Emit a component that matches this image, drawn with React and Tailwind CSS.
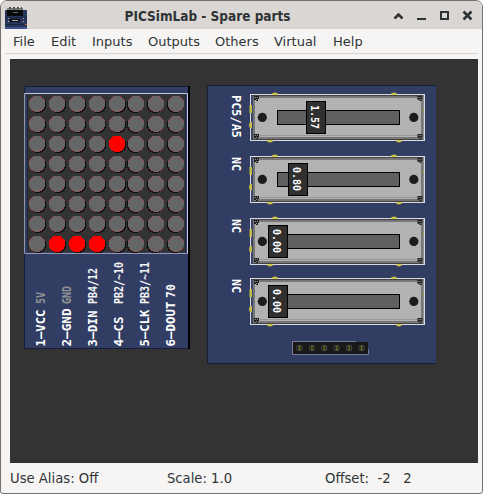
import React from "react";

const lit = new Set(["2-4", "7-1", "7-2", "7-3"]);
const steps = [0, 1, 2, 3, 4, 5, 6, 7];

const pins = [
  { x: 20.5, name: "1—VCC", len: 37, value: "5V", vlen: 12, dim: true },
  { x: 46.5, name: "2—GND", len: 38, value: "GND", vlen: 18, dim: true },
  { x: 72.5, name: "3—DIN", len: 36, value: "PB4/12", vlen: 36 },
  { x: 98.5, name: "4—CS", len: 30, value: "PB2/~10", vlen: 42 },
  { x: 124.5, name: "5—CLK", len: 37, value: "PB3/~11", vlen: 42 },
  { x: 150.5, name: "6—DOUT", len: 45, value: "70", vlen: 14, short: true },
];

const pots = [
  { y: 9, label: "PC5/A5", len: 43, value: "1.57", knob: 99 },
  { y: 71, label: "NC", len: 14, value: "0.80", knob: 81 },
  { y: 133, label: "NC", len: 14, value: "0.00", knob: 61 },
  { y: 193, label: "NC", len: 14, value: "0.00", knob: 61 },
];

const menus = [
  ["File", "w-[38px]"],
  ["Edit", "w-[41px]"],
  ["Inputs", "w-14"],
  ["Outputs", "w-[67px]"],
  ["Others", "w-[59px]"],
  ["Virtual", "w-[59px]"],
  ["Help", "w-[40px]"],
];

function BoardIcon() {
  return (
    <svg width="22" height="22" viewBox="0 0 22 22" shapeRendering="crispEdges">
      <path d="M2 1h16v2H2z" fill="#7b8078" />
      <path d="M4 0h2v2H4zM8 0h2v2H8zM12 0h2v2h-2zM16 0h1v2h-1z" fill="#4b504d" />
      <path d="M0 3h22v19H0z" fill="#27365c" />
      <path d="M2 3h16v6H2z" fill="#090a0c" />
      <path d="M8 5h5v1H8z" fill="#646464" />
      <path d="M0 10h22v1H0zM1 17h17v1H1z" fill="#18213a" />
      <path d="M5 12h10v3H5z" fill="#080808" />
      <path d="M7 13h6v1H7z" fill="#b3b5b5" />
      <path d="M3 11h1v1H3zM3 14h1v1H3zM18 11h1v1h-1zM18 14h1v1h-1z" fill="#d1bb9d" />
      <path d="M20 17h2v1h-2z" fill="#d6552d" />
      <path d="M0 20h22v2H0z" fill="#40538c" />
    </svg>
  );
}

const DISC = "M-4 -8H4V-7H5V-6H6V-5H7V-4H8V3H7V5H6V6H5V7H3V8H-3V7H-5V6H-6V5H-7V3H-8V-4H-7V-5H-6V-6H-5V-7H-4Z";

function Led({ x, y, on, flip }) {
  return (
    <g transform={`translate(${x} ${y})`} shapeRendering="crispEdges">
      <path d={DISC} transform={flip ? "translate(-1 1)" : "translate(1 1)"} fill="#101010" />
      <path d={DISC} fill={on ? "#ff0000" : "#666"} />
      {!on && (
        <path
          d="M-4 -8h1v1h-1zM3 -8h1v1h-1zM-6 -6h1v1h-1zM5 -6h1v1h-1zM-8 -4h1v1h-1zM7 -4h1v1h-1zM-7 4h1v1h-1zM6 4h1v1h-1zM-5 6h1v1h-1zM4 6h1v1h-1zM-3 7h1v1h-1zM2 7h1v1h-1z"
          fill="#b83636"
        />
      )}
    </g>
  );
}

function MatrixBoard() {
  return (
    <svg width="166" height="263" viewBox="0 0 166 263" className="absolute left-[14px] top-[27px]">
      <rect width="166" height="263" fill="#000" />
      <rect width="164" height="263" fill="#313d63" />
      <path d="M0.5 263V0.5H164M0 262.5H164" fill="none" stroke="#151e38" />
      <rect x="4" y="8" width="157" height="158" fill="#333" />
      <path d="M3.5 8V166M161.5 8V166" stroke="#20273c" />
      <path d="M0 7.5H163.5V167" fill="none" stroke="#c5cbe0" />
      <path d="M0.5 7V167.5H164" fill="none" stroke="#9298aa" />
      {steps.map((r) =>
        steps.map((c) => (
          <Led key={r + "-" + c} x={13 + c * 20 - (c > 4 ? 1 : 0)} y={18 + r * 20} on={lit.has(r + "-" + c)} flip={c > 4} />
        ))
      )}
      {pins.map((p) => (
        <g key={p.name} transform={`translate(${p.x} 260.5) rotate(-90)`} fontFamily="'DejaVu Sans Mono', monospace" fontWeight="bold">
          <text fontSize="12.3" fill="#fff" textLength={p.len} lengthAdjust="spacingAndGlyphs">
            {p.name}
          </text>
          <text x={p.short ? 48.5 : 42.5} fontSize="11.4" fill={p.dim ? "#929292" : "#f3f3f3"} textLength={p.vlen} lengthAdjust="spacingAndGlyphs">
            {p.value}
          </text>
        </g>
      ))}
    </svg>
  );
}

function Screw({ x, y }) {
  return (
    <g transform={`translate(${x} ${y})`}>
      <path d="M0 0h5v3h-1v2h-2v-1h-2z" fill="#222" />
      <path d="M1 1h1v1H1zM3 1h1v1H3zM2 3h1v1H2z" fill="#999" />
    </g>
  );
}

function Pot({ pot }) {
  return (
    <g transform={`translate(0 ${pot.y})`}>
      <text transform="translate(25 1) rotate(90)" fontFamily="'DejaVu Sans Mono', monospace" fontWeight="bold" fontSize="12.3" fill="#fff" textLength={pot.len} lengthAdjust="spacingAndGlyphs">
        {pot.label}
      </text>
      <path d="M65 0a3 1.6 0 0 1 6 0zM184 0a3 1.6 0 0 1 6 0zM60 47a3 1.4 0 0 0 6 0zM189 47a3 1.4 0 0 0 6 0z" fill="#c5bd45" />
      <rect x="43" y="0" width="175" height="47" fill="#d9d9df" />
      <rect x="44" y="1" width="173" height="45" fill="#8f8f91" />
      <rect x="44" y="1" width="2" height="45" fill="#394568" />
      <path d="M42.5 11h2.5v8h-2.5zM45 28a3 3.2 0 0 0 0 6.4z" fill="#c5bd45" />
      <path d="M216.5 14v3" stroke="#a39b48" />
      <rect x="46" y="1" width="170" height="44" fill="#777" />
      <path d="M46 1.5H216M46 45.5H216" stroke="#444" />
      <path d="M65 1a3 1.4 0 0 1 6 0zM184 1a3 1.4 0 0 1 6 0zM60 46a3 1.4 0 0 0 6 0zM189 46a3 1.4 0 0 0 6 0z" fill="#d0c84a" />
      <rect x="48" y="4" width="166" height="39" fill="#b2b2b2" />
      <path d="M48 41.5H214" stroke="#969696" />
      <Screw x={47} y={2} />
      <Screw x={47} y={40} />
      <Screw x={210.5} y={2} />
      <Screw x={210.5} y={40} />
      <circle cx="55.3" cy="23.4" r="4.6" fill="#1d1d1d" />
      <circle cx="206.8" cy="23.4" r="4.6" fill="#1d1d1d" />
      <rect x="70.5" y="16.5" width="122" height="14" fill="#606060" stroke="#000" />
      <rect x={pot.knob + 0.5} y="7.5" width="19" height="32" fill="#303030" stroke="#000" />
      <text transform={`translate(${pot.knob + 5} 11) rotate(90)`} fontFamily="'DejaVu Sans Mono', monospace" fontWeight="bold" fontSize="10" fill="#fff" textLength="24" lengthAdjust="spacing">
        {pot.value}
      </text>
    </g>
  );
}

function PotBoard() {
  return (
    <svg width="229" height="279" viewBox="0 0 229 279" className="absolute left-[197px] top-[26px]">
      <rect width="229" height="279" fill="#313d63" />
      <path d="M0.5 279V0.5H229M0 278.5H229" fill="none" stroke="#151e38" />
      {pots.map((p) => (
        <Pot key={p.y} pot={p} />
      ))}
      <rect x="86" y="257" width="75" height="13" fill="#191919" />
      <path d="M85.5 256.5V269.5H161.5V264M85 256.5H149" fill="none" stroke="#777e94" />
      {[0, 1, 2, 3, 4, 5].map((i) => (
        <g key={i} transform={`translate(${90 + i * 12.4} 260.5)`}>
          <rect width="5" height="5" rx="1" fill="#151515" stroke="#56565b" strokeWidth="0.8" />
          <path d="M1 1.5h3M2.5 1v3M1.5 4h2.5" stroke="#777821" strokeWidth="0.9" />
        </g>
      ))}
    </svg>
  );
}

export default function App() {
  return (
    <div className="h-[494px] w-[483px] overflow-hidden bg-white font-['DejaVu_Sans',sans-serif] text-[13.33px] text-[#2e3436]">
      <div className="flex h-full flex-col overflow-hidden rounded-b-[3px] rounded-t-[7px] border border-[#77716e] bg-[#f6f5f4]">
        <header className="flex h-7 shrink-0 items-center bg-[#dad6d3] pl-1">
          <div className="mt-[6px] w-[22px]">
            <BoardIcon />
          </div>
          <h1 className="ml-[98px] w-[240px] whitespace-nowrap pt-[2px] font-bold leading-5">
            <svg width="170" height="20" className="block overflow-visible">
              <text x="-0.5" y="14.5" fill="#2e3436" textLength="166" lengthAdjust="spacingAndGlyphs">PICSimLab - Spare parts</text>
            </svg>
          </h1>
          <svg width="84" height="12" viewBox="0 0 84 12" className="ml-[27px] mt-[2px] shrink-0" fill="none" stroke="#2e3436" strokeWidth="2">
            <path d="M2.5 8.5L6.5 4.5L10.5 8.5" strokeWidth="2.5" />
            <path d="M25 9H34" />
            <path d="M49 2H56V9H49Z" />
            <path d="M71.5 1.5L79.5 9.5M79.5 1.5L71.5 9.5" strokeWidth="2.6" />
          </svg>
        </header>
        <nav className="mx-1 flex h-[25px] shrink-0 items-center border-b border-[#d8d5d2] pl-2 pt-[2px] text-[13px]">
          {menus.map(([name, width]) => (
            <span key={name} className={width}>{name}</span>
          ))}
        </nav>
        <main className="relative ml-[9px] mt-[5px] h-[404px] w-[468px] shrink-0 bg-[#333]">
          <MatrixBoard />
          <PotBoard />
        </main>
        <footer className="flex flex-1 items-center whitespace-pre pl-[9px] pt-[2px] text-[13.2px]">
          <span className="w-[157px]">Use Alias: Off</span>
          <span className="w-[158px]">Scale: 1.0</span>
          <span>Offset:  -2   2</span>
        </footer>
      </div>
    </div>
  );
}
